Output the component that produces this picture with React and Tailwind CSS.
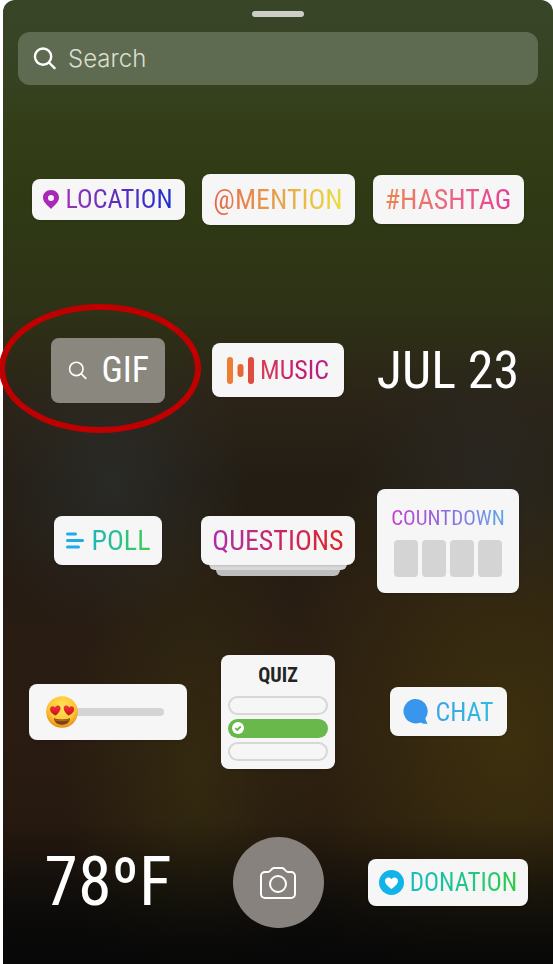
import { useState } from "react";

const label =
  "font-['Roboto_Condensed','Liberation_Sans_Narrow','DejaVu_Sans_Condensed',sans-serif] leading-tight whitespace-nowrap";
const card = "flex items-center justify-center rounded-lg bg-[#f6f6f6] shadow-sm";

function SearchIcon({ className }) {
  return (
    <svg className={className} viewBox="0 0 24 24" fill="none" stroke="white" strokeLinecap="round" aria-hidden="true">
      <circle cx="10.5" cy="10" r="8.5" />
      <path d="M16.7 16.2L22.5 22" />
    </svg>
  );
}

function GradientText({ className, children }) {
  return (
    <span className={`${label} bg-linear-to-r bg-clip-text text-transparent ${className}`}>
      {children}
    </span>
  );
}

function HeartEyes() {
  return (
    <svg className="absolute left-[17px] h-8 w-8" viewBox="0 0 32 32" aria-hidden="true">
      <defs>
        <radialGradient id="face" cx="0.5" cy="0.35" r="0.65">
          <stop offset="0" stopColor="#ffe55c" />
          <stop offset="0.65" stopColor="#fdc634" />
          <stop offset="1" stopColor="#e98a15" />
        </radialGradient>
        <linearGradient id="heart" x1="0" y1="0" x2="0" y2="1">
          <stop offset="0" stopColor="#f5353a" />
          <stop offset="1" stopColor="#c8101c" />
        </linearGradient>
      </defs>
      <circle cx="16" cy="16" r="15.8" fill="url(#face)" />
      <path d="M9.6 19.5C5.6 17.6 3.4 14.8 4.2 12.2C5 9.8 7.8 9.6 9 11.4C10.3 9 13.6 8.8 14.4 11.2C15.1 14 12.5 17.3 9.6 19.5Z" fill="url(#heart)" />
      <path d="M22.6 19.5C26.6 17.6 28.8 14.8 28 12.2C27.2 9.8 24.4 9.6 23.2 11.4C21.9 9 18.6 8.8 17.8 11.2C17.1 14 19.7 17.3 22.6 19.5Z" fill="url(#heart)" />
      <path d="M7.8 22.2C13 24 19 24 24.2 22.2C23.5 26.7 20 28.7 16 28.7C12 28.7 8.5 26.7 7.8 22.2Z" fill="#7a4410" />
      <path d="M8.8 22.9C13.2 24.3 18.8 24.3 23.2 22.9L22.6 24.4C18.5 25.5 13.5 25.5 9.4 24.4Z" fill="#a86a20" />
    </svg>
  );
}

function App() {
  const [query, setQuery] = useState("");
  const [level, setLevel] = useState(0);

  return (
    <div className="min-h-screen bg-white pl-[3px]">
      <main className="flex min-h-screen flex-col rounded-t-xl bg-[linear-gradient(to_bottom,#08080800_85%,#08080899_94%,#080808_100%),radial-gradient(ellipse_at_20%_50%,#2d323299_0%,#2d323200_22%),radial-gradient(ellipse_at_88%_49%,#28292a99_0%,#28292a00_20%),radial-gradient(ellipse_at_92%_77%,#41350dcc_0%,#41350d00_34%),radial-gradient(ellipse_at_35%_80%,#37300fb3_0%,#37300f00_26%),linear-gradient(to_bottom,#394527_0%,#374424_6%,#343f1a_12%,#2f3a15_21%,#2e3216_32%,#2b2317_42%,#231d14_50%,#271c13_62%,#2a1c12_76%,#25180f_88%,#15120d_95%,#080808_100%)]">
        <header className="flex h-[118px] flex-col items-center px-[15px] pt-[11px]">
          <div className="h-1.5 w-[52px] rounded-full bg-[#cccdc5]" />
          <label className="mt-[15px] flex h-[53px] w-full items-center gap-3 rounded-xl bg-[#5f6b51] px-[15px]">
            <SearchIcon className="h-[23px] w-[23px] stroke-[2.5]" />
            <input
              className="min-w-0 flex-1 bg-transparent font-['Inter',sans-serif] text-2xl font-light text-white outline-none placeholder:text-[#d9decf]"
              type="text"
              aria-label="Search"
              placeholder="Search"
              value={query}
              onChange={(e) => setQuery(e.target.value)}
            />
          </label>
        </header>

        <section className="grid flex-1 auto-rows-fr grid-cols-3 place-items-center gap-y-2 px-5">
          <button className={`${card} h-[41px] w-[153px] gap-1.5`}>
            <svg className="h-[19px] w-4" viewBox="0 0 16 19" aria-hidden="true">
              <path fillRule="evenodd" d="M8 0C3.4 0 0 3.3 0 7.6C0 12.4 4.5 15.3 8 19C11.5 15.3 16 12.4 16 7.6C16 3.3 12.6 0 8 0ZM8 5A3 3 0 1 1 8 11A3 3 0 1 1 8 5Z" fill="#a928b5" />
            </svg>
            <GradientText className="from-[#9e30b8] via-[#5a2bbb] to-[#1230cf] text-[26px]">LOCATION</GradientText>
          </button>

          <button className={`${card} h-[51px] w-[153px]`}>
            <GradientText className="from-[#e4674c] via-[#e6a04d] to-[#e9e03d] text-[28px]">@MENTION</GradientText>
          </button>

          <button className={`${card} h-[49px] w-[151px]`}>
            <GradientText className="from-[#ea8450] via-[#ea6880] to-[#e43b96] text-[28px]">#HASHTAG</GradientText>
          </button>

          <div className="relative">
            <button className="flex h-[65px] w-[114px] items-center justify-between rounded-lg bg-[#8a877f] pr-4 pl-[17px]">
              <SearchIcon className="h-[19px] w-[19px] stroke-2" />
              <span className={`${label} text-[36px] text-white`}>GIF</span>
            </button>
            <div className="pointer-events-none absolute -top-[34px] -left-[52px] h-[129px] w-[202px] rounded-[50%] border-6 border-[#c00000]" />
          </div>

          <button className={`${card} h-[54px] w-[132px] gap-1.5`}>
            <svg className="h-[27px] w-[27px]" viewBox="0 0 27 27" aria-hidden="true">
              <rect x="0" y="0" width="6" height="27" rx="3" fill="#ed7d35" />
              <rect x="10.5" y="7" width="6" height="13" rx="3" fill="#e86536" />
              <rect x="21" y="0" width="6" height="27" rx="3" fill="#df4b3e" />
            </svg>
            <GradientText className="from-[#d83f54] via-[#c9186c] to-[#b0218c] text-[26px]">MUSIC</GradientText>
          </button>

          <button className={`${label} text-[52px] text-white`}>JUL 23</button>

          <button className={`${card} h-[49px] w-[108px] gap-2`}>
            <svg className="h-[17px] w-[18px]" viewBox="0 0 18 17" stroke="#20aaea" strokeWidth="3" strokeLinecap="round" aria-hidden="true">
              <path d="M1.5 2H9.5M1.5 8.5H16.5M1.5 15H12.5" />
            </svg>
            <GradientText className="from-[#22b4b8] to-[#3bcd48] text-[28px]">POLL</GradientText>
          </button>

          <div className="relative">
            <div className="absolute inset-x-[15px] -bottom-[11px] h-5 rounded-md bg-[#bebebe]" />
            <div className="absolute inset-x-2 -bottom-[5px] h-5 rounded-md bg-[#d9d9d9]" />
            <button className={`${card} relative h-[49px] w-[154px]`}>
              <GradientText className="from-[#a82daf] via-[#c92262] to-[#e0251c] text-[28px]">QUESTIONS</GradientText>
            </button>
          </div>

          <button className={`${card} h-[104px] w-[142px] flex-col gap-2`}>
            <GradientText className="from-[#c336cf] via-[#8a6be0] to-[#5ba5e8] text-[21px]">COUNTDOWN</GradientText>
            <span className="flex gap-1">
              {[0, 1, 2, 3].map((i) => (
                <span key={i} className="h-[37px] w-6 rounded-sm bg-[#d4d4d4]" />
              ))}
            </span>
          </button>

          <div className={`${card} relative h-14 w-[158px]`}>
            <input
              className="h-2 w-[112px] appearance-none rounded-full bg-[#d4d4d4] [&::-webkit-slider-thumb]:opacity-0"
              type="range"
              aria-label="Emoji slider"
              value={level}
              onChange={(e) => setLevel(e.target.value)}
            />
            <HeartEyes />
          </div>

          <button className={`${card} h-[114px] w-[114px] flex-col gap-1`}>
            <span className={`${label} mb-1 text-[20px] font-bold text-[#242424]`}>QUIZ</span>
            <span className="h-[19px] w-[100px] rounded-full border-2 border-[#d7d7d7]" />
            <span className="flex h-[19px] w-[100px] items-center rounded-full bg-[#69b84c] px-1">
              <svg className="h-3 w-3" viewBox="0 0 12 12" aria-hidden="true">
                <circle cx="6" cy="6" r="6" fill="white" />
                <path d="M3.2 6.2L5.2 8L8.8 4.5" fill="none" stroke="#69b84c" strokeWidth="1.8" />
              </svg>
            </span>
            <span className="h-[19px] w-[100px] rounded-full border-2 border-[#d7d7d7]" />
          </button>

          <button className={`${card} h-[49px] w-[117px] gap-2`}>
            <svg className="h-[25px] w-[25px]" viewBox="0 0 25 25" aria-hidden="true">
              <path d="M12.3 0A12.2 12.2 0 1 0 17.5 23.4C19.5 24.6 22 25.2 24.8 24.5C23.3 23 22.8 21.2 22.4 19.2A12.2 12.2 0 0 0 12.3 0Z" fill="#3897ed" />
            </svg>
            <GradientText className="from-[#3aa5e5] to-[#2fbbe0] text-[26px]">CHAT</GradientText>
          </button>

          <button className={`${label} text-[68px] text-white`}>78ºF</button>

          <button aria-label="Selfie sticker" className="flex h-[91px] w-[91px] items-center justify-center rounded-full bg-[#88827f]">
            <svg className="h-8 w-9" viewBox="0 0 36 32" fill="none" stroke="white" strokeWidth="2" aria-hidden="true">
              <path d="M5 5H8C11 5 11 1 14 1H22C25 1 25 5 28 5H31A4 4 0 0 1 35 9V27A4 4 0 0 1 31 31H5A4 4 0 0 1 1 27V9A4 4 0 0 1 5 5Z" />
              <circle cx="18" cy="17" r="8" />
            </svg>
          </button>

          <button className={`${card} h-[47px] w-40 gap-1.5`}>
            <svg className="h-[25px] w-[25px]" viewBox="0 0 25 25" aria-hidden="true">
              <circle cx="12.5" cy="12.5" r="12.5" fill="#12b3e8" />
              <path d="M12.5 19C9 16.5 6 13.8 6 10.8C6 7.3 10.6 6 12.5 9.3C14.4 6 19 7.3 19 10.8C19 13.8 16 16.5 12.5 19Z" fill="white" />
            </svg>
            <GradientText className="from-[#18bcc0] to-[#2fcb42] text-[25px]">DONATION</GradientText>
          </button>
        </section>
      </main>
    </div>
  );
}

export default App;
